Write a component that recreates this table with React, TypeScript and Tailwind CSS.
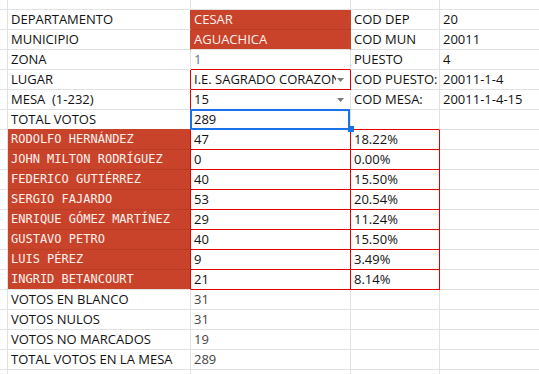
import React from "react";

const rG = "border-r-[#e2e2e2]";
const rR = "border-r-[#e60000]";
const rF = "border-r-[#c9432b]";
const bG = "border-b-[#e2e2e2]";
const bR = "border-b-[#e60000]";
const bF = "border-b-[#c9432b]";
const bD = "border-b-[#b83c26]";

type Cell = {
  t?: string;
  r?: string;
  b?: string;
  cls?: string;
  mono?: boolean;
  kind?: "dd" | "sel";
};

const SANS = "font-['Open_Sans',sans-serif] text-[13px] text-[#111]";
const MONO = "font-['DejaVu_Sans_Mono',monospace] text-[12px]";
const FILL = "bg-[#c9432b] text-[#fdf1ee]";
const VAL = "text-[#454545]";

const blank = (r = rG, b = bG): Cell => ({ r, b });

const candidates: [string, string, string][] = [
  ["RODOLFO HERNÁNDEZ", "47", "18.22%"],
  ["JOHN MILTON RODRÍGUEZ", "0", "0.00%"],
  ["FEDERICO GUTIÉRREZ", "40", "15.50%"],
  ["SERGIO FAJARDO", "53", "20.54%"],
  ["ENRIQUE GÓMEZ MARTÍNEZ", "29", "11.24%"],
  ["GUSTAVO PETRO", "40", "15.50%"],
  ["LUIS PÉREZ", "9", "3.49%"],
  ["INGRID BETANCOURT", "21", "8.14%"],
];

const rows: Cell[][] = [
  [blank(), blank(), blank(), blank(), blank()],
  [
    blank(),
    { t: "DEPARTAMENTO", r: rF },
    { t: "CESAR", r: rF, b: bD, cls: FILL },
    { t: "COD DEP" },
    { t: "20" },
  ],
  [
    blank(),
    { t: "MUNICIPIO", r: rF },
    { t: "AGUACHICA", r: rF, cls: FILL },
    { t: "COD MUN" },
    { t: "20011" },
  ],
  [
    blank(),
    { t: "ZONA" },
    { t: "1", b: bR, cls: "text-[#56779b]" },
    { t: "PUESTO" },
    { t: "4" },
  ],
  [
    blank(),
    { t: "LUGAR", r: rR },
    { t: "I.E. SAGRADO CORAZON", r: rR, b: bR, kind: "dd" },
    { t: "COD PUESTO:" },
    { t: "20011-1-4" },
  ],
  [
    blank(),
    { t: "MESA  (1-232)", r: rR },
    { t: "15", kind: "dd" },
    { t: "COD MESA:" },
    { t: "20011-1-4-15" },
  ],
  [
    blank(),
    { t: "TOTAL VOTOS", b: bF },
    { t: "289", b: bR, kind: "sel" },
    { b: bR },
    {},
  ],
  ...candidates.map(([name, v, p], i): Cell[] => [
    blank(),
    {
      t: name,
      r: rR,
      b: i === candidates.length - 1 ? bG : bD,
      cls: FILL,
      mono: true,
    },
    { t: v, r: rR, b: bR },
    { t: p, r: rR, b: bR },
    {},
  ]),
  [blank(), { t: "VOTOS EN BLANCO" }, { t: "31", cls: VAL }, {}, {}],
  [blank(), { t: "VOTOS NULOS" }, { t: "31", cls: VAL }, {}, {}],
  [blank(), { t: "VOTOS NO MARCADOS" }, { t: "19", cls: VAL }, {}, {}],
  [blank(), { t: "TOTAL VOTOS EN LA MESA" }, { t: "289", cls: VAL }, {}, {}],
  [blank(), blank(), blank(), blank(), blank()],
];

function Arrow() {
  return (
    <svg width="7" height="4" viewBox="0 0 7 4" className="shrink-0 mr-[6px] ml-[1px]">
      <path d="M0 0 L7 0 L3.5 4 Z" fill="#7a7a7a" />
    </svg>
  );
}

function CellView({ c }: { c: Cell }) {
  const font = c.mono ? MONO : SANS;
  const base = `relative box-border border-r border-b ${c.r ?? rG} ${c.b ?? bG} leading-[19px] whitespace-pre ${font} ${c.cls ?? ""}`;
  if (c.kind === "dd") {
    return (
      <div className={`${base} flex items-center pl-[3px] overflow-hidden`}>
        <span className="flex-1 min-w-0 overflow-hidden">{c.t}</span>
        <Arrow />
      </div>
    );
  }
  if (c.kind === "sel") {
    return (
      <div className={`${base} pl-[3px]`}>
        {c.t}
        <div className="absolute -top-[1px] -left-[1px] w-[160px] h-[21px] border-2 border-[#1a73e8] pointer-events-none" />
        <div className="absolute -right-[4px] -bottom-[3px] w-[6px] h-[6px] bg-[#1a73e8] z-10" />
      </div>
    );
  }
  return <div className={`${base} pl-[3px] overflow-hidden`}>{c.t}</div>;
}

export default function App() {
  return (
    <div className="w-[539px] h-[374px] overflow-hidden bg-white">
      <div className="grid grid-cols-[8px_183px_160px_89px_120px] grid-rows-[10px] auto-rows-[20px]">
        {rows.map((row, ri) =>
          row.map((c, ci) => <CellView key={`${ri}-${ci}`} c={c} />)
        )}
      </div>
    </div>
  );
}
